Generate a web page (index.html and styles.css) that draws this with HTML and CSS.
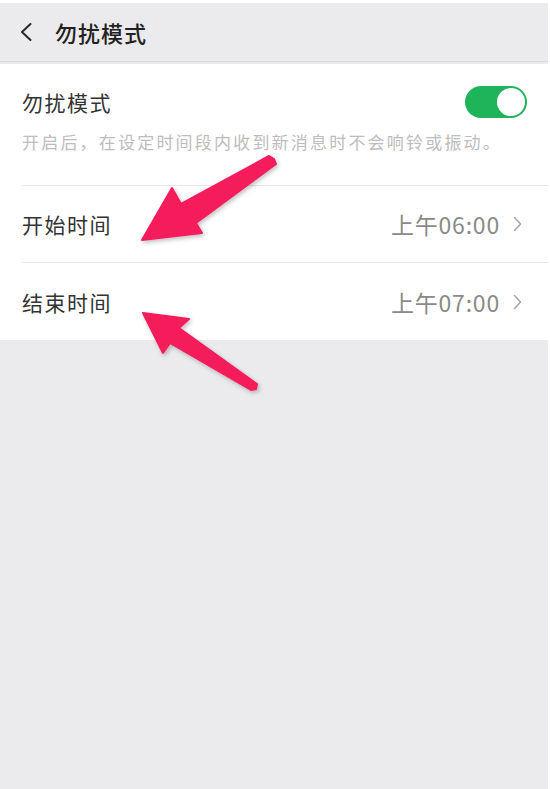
FILE: index.html
```html
<!DOCTYPE html>
<html lang="zh-CN">
<head>
<meta charset="utf-8">
<title>勿扰模式</title>
<link rel="stylesheet" href="styles.css">
</head>
<body>
<div class="page">
  <header class="topbar">
    <svg class="back" viewBox="0 0 12 18" width="12" height="18"><polyline points="10.5,1 2,9 10.5,17" fill="none" stroke="#2b2b2b" stroke-width="2" stroke-linecap="round" stroke-linejoin="round"/></svg>
    <h1 class="title">勿扰模式</h1>
  </header>
  <section class="list">
    <div class="item item-first">
      <div class="item-inner">
        <div class="head-row">
          <span class="label">勿扰模式</span>
          <span class="switch"><span class="knob"></span></span>
        </div>
        <p class="desc">开启后，在设定时间段内收到新消息时不会响铃或振动。</p>
      </div>
    </div>
    <div class="item">
      <div class="item-inner row">
        <span class="label">开始时间</span>
        <span class="value">上午06:00<svg class="chev" viewBox="0 0 9 16" width="9" height="16"><polyline points="1.5,1.5 7.5,8 1.5,14.5" fill="none" stroke="#a6a6a6" stroke-width="1.6" stroke-linecap="round" stroke-linejoin="round"/></svg></span>
      </div>
    </div>
    <div class="item">
      <div class="item-inner row last">
        <span class="label">结束时间</span>
        <span class="value">上午07:00<svg class="chev" viewBox="0 0 9 16" width="9" height="16"><polyline points="1.5,1.5 7.5,8 1.5,14.5" fill="none" stroke="#a6a6a6" stroke-width="1.6" stroke-linecap="round" stroke-linejoin="round"/></svg></span>
      </div>
    </div>
  </section>
  <svg class="arrows" viewBox="0 0 550 789" width="550" height="789">
    <defs>
      <filter id="sh" x="-20%" y="-20%" width="140%" height="140%">
        <feDropShadow dx="1.5" dy="2" stdDeviation="2" flood-color="#000" flood-opacity="0.25"/>
      </filter>
    </defs>
    <g fill="#f51b5c" stroke="#f51b5c" stroke-width="2" stroke-linejoin="round" filter="url(#sh)">
      <polygon points="142,240 172,188 181,204 269,156 274,159 276,164 196,223 202,233"/>
      <polygon points="143,313 189,319 179,328 257,384 256,389 251,390 170,343 163,353"/>
    </g>
  </svg>
</div>
</body>
</html>
```
FILE: styles.css
```css
html, body {
  margin: 0;
  padding: 0;
}
body {
  background: #ffffff;
  font-family: "Noto Sans CJK SC", "Noto Sans", sans-serif;
}
.page {
  position: relative;
  width: 548px;
  height: 786px;
  margin-top: 3px;
  background: #ebeaec;
  overflow: hidden;
}
.topbar {
  height: 58px;
  display: flex;
  align-items: center;
  padding-left: 20px;
  background: #ebeaec;
  border-bottom: 1px solid #d9d8da;
}
.back {
  display: block;
  margin-right: 23px;
}
.title {
  margin: 0;
  font-size: 22px;
  font-weight: 500;
  letter-spacing: 1px;
  color: #222222;
  line-height: 30px;
}
.list {
  margin-top: 2px;
  background: #ffffff;
}
.item {
  padding-left: 22px;
}
.item-inner {
  border-bottom: 1px solid #e8e8e8;
}
.item-first .item-inner {
  padding: 23px 21px 31px 0;
}
.head-row {
  display: flex;
  align-items: center;
  justify-content: space-between;
  height: 30px;
}
.label {
  font-size: 21px;
  letter-spacing: 1.5px;
  color: #333333;
  line-height: 30px;
}
.switch {
  position: relative;
  width: 62px;
  height: 32px;
  border-radius: 16px;
  background: #1fb35a;
}
.knob {
  position: absolute;
  right: 2px;
  top: 2px;
  width: 28px;
  height: 28px;
  border-radius: 50%;
  background: #ffffff;
}
.desc {
  margin: 13px 0 0 0;
  font-size: 17px;
  letter-spacing: 2.2px;
  line-height: 24px;
  color: #bdbdbd;
  white-space: nowrap;
}
.row {
  height: 76px;
  display: flex;
  align-items: center;
  justify-content: space-between;
  padding-right: 26px;
}
.row.last {
  border-bottom: none;
  height: 77px;
}
.value {
  display: flex;
  align-items: center;
  font-size: 23px;
  letter-spacing: 0.8px;
  color: #8a8a8a;
}
.chev {
  display: block;
  margin-left: 13px;
}
.arrows {
  position: absolute;
  left: 0;
  top: -3px;
  pointer-events: none;
}
```
